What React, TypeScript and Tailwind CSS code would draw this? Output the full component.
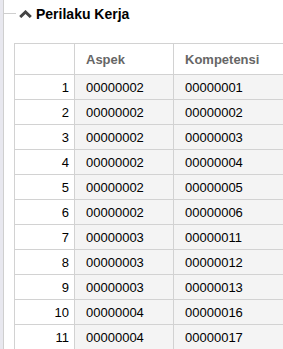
import React from 'react';

const ROWS: [string, string][] = [
  ['00000002', '00000001'],
  ['00000002', '00000002'],
  ['00000002', '00000003'],
  ['00000002', '00000004'],
  ['00000002', '00000005'],
  ['00000002', '00000006'],
  ['00000003', '00000011'],
  ['00000003', '00000012'],
  ['00000003', '00000013'],
  ['00000004', '00000016'],
  ['00000004', '00000017'],
];

const ChevronUp = () => (
  <svg width="13" height="8" viewBox="0 0 13 8" className="shrink-0">
    <path d="M1.2 7 L6.5 2 L11.8 7" fill="none" stroke="#444" strokeWidth="3" />
  </svg>
);

const App: React.FC = () => {
  return (
    <div className="w-[283px] h-[349px] overflow-hidden bg-white flex font-['Liberation_Sans',Arial,sans-serif]">
      <div className="w-[3px] shrink-0 bg-[#e8e8ef]" />
      <div className="flex-1 border-l border-[#cfcfcf] min-w-0">
        <div className="flex items-start h-[43px]">
          <div className="mt-[13px] w-[12px] h-px bg-[#cfcfcf]" />
          <div className="flex items-center gap-[4px] pl-[3px] pt-[6px]">
            <ChevronUp />
            <span className="text-[14px] leading-[16px] font-bold text-black">Perilaku Kerja</span>
          </div>
        </div>
        <table className="ml-[10px] border-collapse text-[13px] w-[300px] table-fixed">
          <colgroup>
            <col className="w-[60px]" />
            <col className="w-[99px]" />
            <col />
          </colgroup>
          <thead>
            <tr className="h-[31px]">
              <th className="border border-[#d2d2d2] bg-white" />
              <th className="border border-[#d2d2d2] bg-white text-left pl-[11px] pt-px font-bold text-[#666]">Aspek</th>
              <th className="border border-[#d2d2d2] bg-white text-left pl-[11px] pt-px font-bold text-[#666]">Kompetensi</th>
            </tr>
          </thead>
          <tbody>
            {ROWS.map(([aspek, komp], i) => (
              <tr key={i} className="h-[25px]">
                <td className="border border-[#d2d2d2] bg-white text-right pr-[5px] pt-px text-black">{i + 1}</td>
                <td className="border border-[#d2d2d2] bg-[#f4f4f4] pl-[11px] pt-px text-black">{aspek}</td>
                <td className="border border-[#d2d2d2] bg-[#f4f4f4] pl-[11px] pt-px text-black">{komp}</td>
              </tr>
            ))}
          </tbody>
        </table>
      </div>
    </div>
  );
};

export default App;
